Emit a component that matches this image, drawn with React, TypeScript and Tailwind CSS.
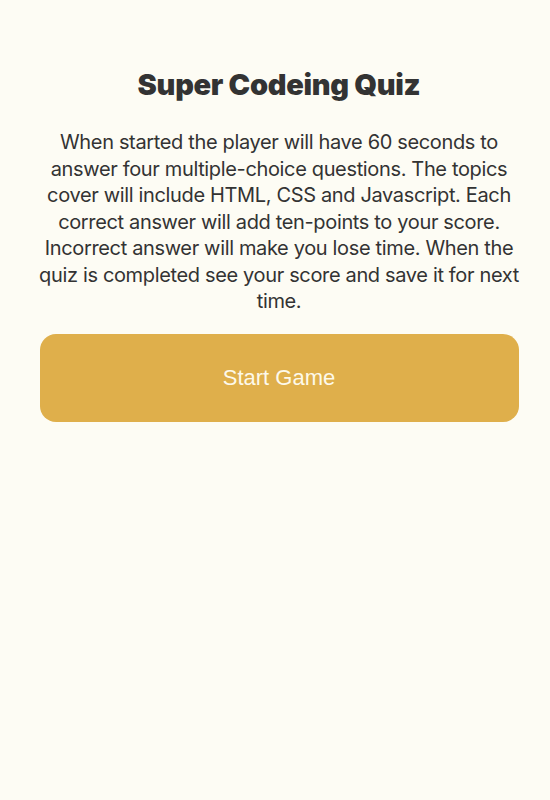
export default function App() {
  return (
    <div className="min-h-[800px] w-full bg-[#fdfcf4] text-[#333333]">
      <main className="flex flex-col items-center pl-[36px] pr-[28px] pt-[65px]">
        <h1 className="text-[29px] font-black leading-[40px] tracking-[-0.3px] text-[#333333] [font-family:Inter,'Liberation_Sans',sans-serif]">
          Super Codeing Quiz
        </h1>
        <p className="mt-[24px] text-center text-[20px] leading-[26.5px] tracking-[-0.35px] [font-family:Inter,'Liberation_Sans',sans-serif]">
          When started the player will have 60 seconds to answer four multiple-choice questions. The topics cover will include HTML, CSS and Javascript. Each correct answer will add ten-points to your score. Incorrect answer will make you lose time. When the quiz is completed see your score and save it for next time.
        </p>
        <button className="mt-[19px] h-[88px] w-[479px] rounded-[16px] bg-[#dfaf4b] text-[22px] text-[#fdf9ea] [font-family:'Liberation_Sans',Arial,sans-serif]">
          Start Game
        </button>
      </main>
    </div>
  );
}
